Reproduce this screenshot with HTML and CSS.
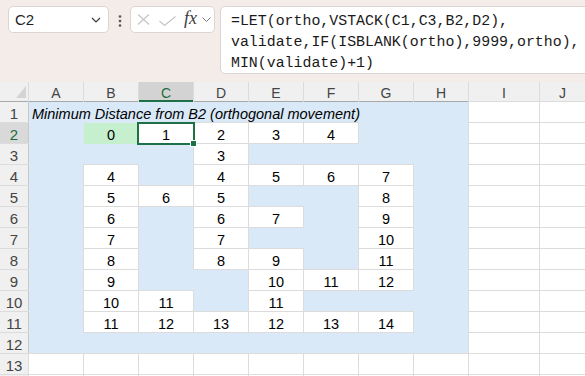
FILE: index.html
```html
<!DOCTYPE html>
<html lang="en">
<head>
    <meta charset="UTF-8">
    <meta name="viewport" content="width=device-width, initial-scale=1.0">
    <title>Minimum Distance from B2</title>
    <link rel="stylesheet" href="styles.css">
</head>
<body>
    <div class="toolbar">
        <div class="namebox">
            <span class="ref">C2</span>
            <svg width="10" height="6" viewBox="0 0 10 6"><path d="M1 1 L5 5 L9 1" fill="none" stroke="#3a3a3a" stroke-width="1.2"/></svg>
        </div>
        <div class="dots">
            <svg width="4" height="12" viewBox="0 0 4 12"><circle cx="2" cy="1.5" r="1.3" fill="#555"/><circle cx="2" cy="6" r="1.3" fill="#555"/><circle cx="2" cy="10.5" r="1.3" fill="#555"/></svg>
        </div>
        <div class="fxbox">
            <svg class="cancel" width="13" height="11" viewBox="0 0 13 11"><path d="M1 0.5 L12 10.5 M12 0.5 L1 10.5" stroke="#c4c4c4" stroke-width="1.1"/></svg>
            <svg class="enter" width="17" height="10" viewBox="0 0 17 10"><path d="M0.5 5 L5.5 9.5 L16.5 0.5" fill="none" stroke="#c4c4c4" stroke-width="1.1"/></svg>
            <span class="fx">fx</span>
            <svg width="9" height="6" viewBox="0 0 9 6"><path d="M0.5 0.5 L4.5 4.5 L8.5 0.5" fill="none" stroke="#777" stroke-width="1"/></svg>
        </div>
        <div class="formula">
            <div class="line">=LET(ortho,VSTACK(C1,C3,B2,D2),</div>
            <div class="line">validate,IF(ISBLANK(ortho),9999,ortho),</div>
            <div class="line">MIN(validate)+1)</div>
        </div>
    </div>

    <div class="sheet">
        <div class="corner"><svg width="28" height="19" viewBox="0 0 28 19"><polygon points="26,4 26,16 16,16" fill="#d4d4d4"/></svg></div>
        <div class="hd">A</div><div class="hd">B</div><div class="hd on">C</div><div class="hd">D</div><div class="hd">E</div><div class="hd">F</div><div class="hd">G</div><div class="hd">H</div><div class="hd">I</div><div class="hd">J</div>

        <div class="rh">1</div>
        <div class="c b title">Minimum Distance from B2 (orthogonal movement)</div>
        <div class="c w"></div><div class="c w"></div>

        <div class="rh on">2</div>
        <div class="c b"></div><div class="c g">0</div><div class="c w sel">1</div><div class="c w">2</div><div class="c w">3</div><div class="c w">4</div><div class="c b"></div><div class="c b"></div>
        <div class="c w"></div><div class="c w"></div>

        <div class="rh">3</div>
        <div class="c b"></div><div class="c b"></div><div class="c b"></div><div class="c w">3</div><div class="c b"></div><div class="c b"></div><div class="c b"></div><div class="c b"></div>
        <div class="c w"></div><div class="c w"></div>

        <div class="rh">4</div>
        <div class="c b"></div><div class="c w">4</div><div class="c b"></div><div class="c w">4</div><div class="c w">5</div><div class="c w">6</div><div class="c w">7</div><div class="c b"></div>
        <div class="c w"></div><div class="c w"></div>

        <div class="rh">5</div>
        <div class="c b"></div><div class="c w">5</div><div class="c w">6</div><div class="c w">5</div><div class="c b"></div><div class="c b"></div><div class="c w">8</div><div class="c b"></div>
        <div class="c w"></div><div class="c w"></div>

        <div class="rh">6</div>
        <div class="c b"></div><div class="c w">6</div><div class="c b"></div><div class="c w">6</div><div class="c w">7</div><div class="c b"></div><div class="c w">9</div><div class="c b"></div>
        <div class="c w"></div><div class="c w"></div>

        <div class="rh">7</div>
        <div class="c b"></div><div class="c w">7</div><div class="c b"></div><div class="c w">7</div><div class="c b"></div><div class="c b"></div><div class="c w">10</div><div class="c b"></div>
        <div class="c w"></div><div class="c w"></div>

        <div class="rh">8</div>
        <div class="c b"></div><div class="c w">8</div><div class="c b"></div><div class="c w">8</div><div class="c w">9</div><div class="c b"></div><div class="c w">11</div><div class="c b"></div>
        <div class="c w"></div><div class="c w"></div>

        <div class="rh">9</div>
        <div class="c b"></div><div class="c w">9</div><div class="c b"></div><div class="c b"></div><div class="c w">10</div><div class="c w">11</div><div class="c w">12</div><div class="c b"></div>
        <div class="c w"></div><div class="c w"></div>

        <div class="rh">10</div>
        <div class="c b"></div><div class="c w">10</div><div class="c w">11</div><div class="c b"></div><div class="c w">11</div><div class="c b"></div><div class="c b"></div><div class="c b"></div>
        <div class="c w"></div><div class="c w"></div>

        <div class="rh">11</div>
        <div class="c b"></div><div class="c w">11</div><div class="c w">12</div><div class="c w">13</div><div class="c w">12</div><div class="c w">13</div><div class="c w">14</div><div class="c b"></div>
        <div class="c w"></div><div class="c w"></div>

        <div class="rh">12</div>
        <div class="c b span8"></div>
        <div class="c w"></div><div class="c w"></div>

        <div class="rh">13</div>
        <div class="c w"></div><div class="c w"></div><div class="c w"></div><div class="c w"></div><div class="c w"></div><div class="c w"></div><div class="c w"></div><div class="c w"></div>
        <div class="c w"></div><div class="c w"></div>

        <!-- row 14 is only the top of the next grid line -->
        <div class="rh"></div>
        <div class="c w"></div><div class="c w"></div><div class="c w"></div><div class="c w"></div><div class="c w"></div><div class="c w"></div><div class="c w"></div><div class="c w"></div>
        <div class="c w"></div><div class="c w"></div>
    </div>
</body>
</html>
```

FILE: styles.css
```css
body {
    margin: 0;
    width: 585px;
    height: 376px;
    overflow: hidden;
    background-color: #f3ece9;
    font-family: "Liberation Sans", Arial, sans-serif;
    color: #000;
}

/* formula bar */
.toolbar {
    display: flex;
    align-items: flex-start;
    height: 82px;
    padding: 6px 0 0 8px;
    box-sizing: border-box;
}
.namebox {
    flex-shrink: 0;
    width: 101px;
    height: 27px;
    box-sizing: border-box;
    background-color: #fff;
    border: 1px solid #ddd5d3;
    border-radius: 5px;
    display: flex;
    align-items: center;
    justify-content: space-between;
    padding: 0 7px 0 6px;
}
.ref {
    font-size: 15px;
    color: #1f1f1f;
}
.dots {
    flex-shrink: 0;
    width: 21px;
    display: flex;
    justify-content: center;
    padding-top: 9px;
}
.fxbox {
    flex-shrink: 0;
    width: 85px;
    height: 27px;
    box-sizing: border-box;
    background-color: #fff;
    border: 1px solid #ddd5d3;
    border-radius: 5px;
    display: flex;
    align-items: center;
    padding-left: 6px;
}
.cancel {
    margin-right: 9px;
}
.enter {
    margin-right: 8px;
    margin-top: 2px;
}
.fx {
    font-family: "Liberation Serif", "Times New Roman", serif;
    font-style: italic;
    font-size: 18px;
    color: #3c3c3c;
    margin-right: 5px;
    margin-top: -2px;
}
.formula {
    flex-shrink: 0;
    margin-left: 5px;
    width: 400px;
    height: 68px;
    box-sizing: border-box;
    background-color: #fff;
    border: 1px solid #ddd5d3;
    border-radius: 5px;
    padding: 4px 0 0 10px;
    font-family: "Liberation Mono", "Courier New", monospace;
    font-size: 14.9px;
    line-height: 21px;
    color: #1a1a1a;
}
.line {
    white-space: nowrap;
}

/* worksheet grid */
.sheet {
    display: grid;
    grid-template-columns: 28px repeat(8, 54px) 70px 45px;
    grid-template-rows: 19px repeat(14, 20px);
    gap: 1px;
    background-color: #dcdcdc;
}
.corner {
    background-color: #f0f0f0;
    box-shadow: 0 1px 0 #a8a8a8;
}
.corner svg {
    display: block;
}
.hd {
    background-color: #f0f0f0;
    color: #444;
    font-size: 14px;
    text-align: center;
    padding-top: 3px;
    line-height: 16px;
    box-sizing: border-box;
    box-shadow: 0 1px 0 #a8a8a8;
}
.hd.on {
    background-color: #d3d3d3;
    color: #1e6b41;
    border-bottom: 1px solid #1e7145;
    box-shadow: 0 1px 0 #1e7145;
}
.rh {
    background-color: #f0f0f0;
    color: #444;
    font-size: 15px;
    text-align: center;
    padding-top: 3px;
    line-height: 18px;
    box-sizing: border-box;
    box-shadow: 1px 0 0 #c8c8c8;
}
.rh.on {
    background-color: #d9d9d9;
    color: #1e6b41;
}
.c {
    font-size: 14.5px;
    text-align: center;
    padding-top: 3px;
    line-height: 18px;
    box-sizing: border-box;
}
/* filled cells hide their grid lines */
.b {
    background-color: #dae9f8;
    box-shadow: 1px 0 0 #dae9f8, 0 1px 0 #dae9f8, 1px 1px 0 #dae9f8;
}
.g {
    background-color: #c6efce;
    box-shadow: 1px 0 0 #c6efce, 0 1px 0 #c6efce, 1px 1px 0 #c6efce;
}
.w {
    background-color: #fff;
    box-shadow: 0 0 0 1px #dcdcdc;
}
.title,
.span8 {
    grid-column: span 8;
}
.title {
    text-align: left;
    font-style: italic;
    padding-left: 3px;
    white-space: nowrap;
}

/* active cell */
.sel {
    position: relative;
}
.sel::after {
    content: "";
    position: absolute;
    top: -1px;
    left: -2px;
    right: -2px;
    bottom: -2px;
    border: 2px solid #1e7145;
}
.sel::before {
    content: "";
    position: absolute;
    right: -4px;
    bottom: -4px;
    width: 5px;
    height: 5px;
    background-color: #1e7145;
    border: 1px solid #fff;
    z-index: 1;
}
```
